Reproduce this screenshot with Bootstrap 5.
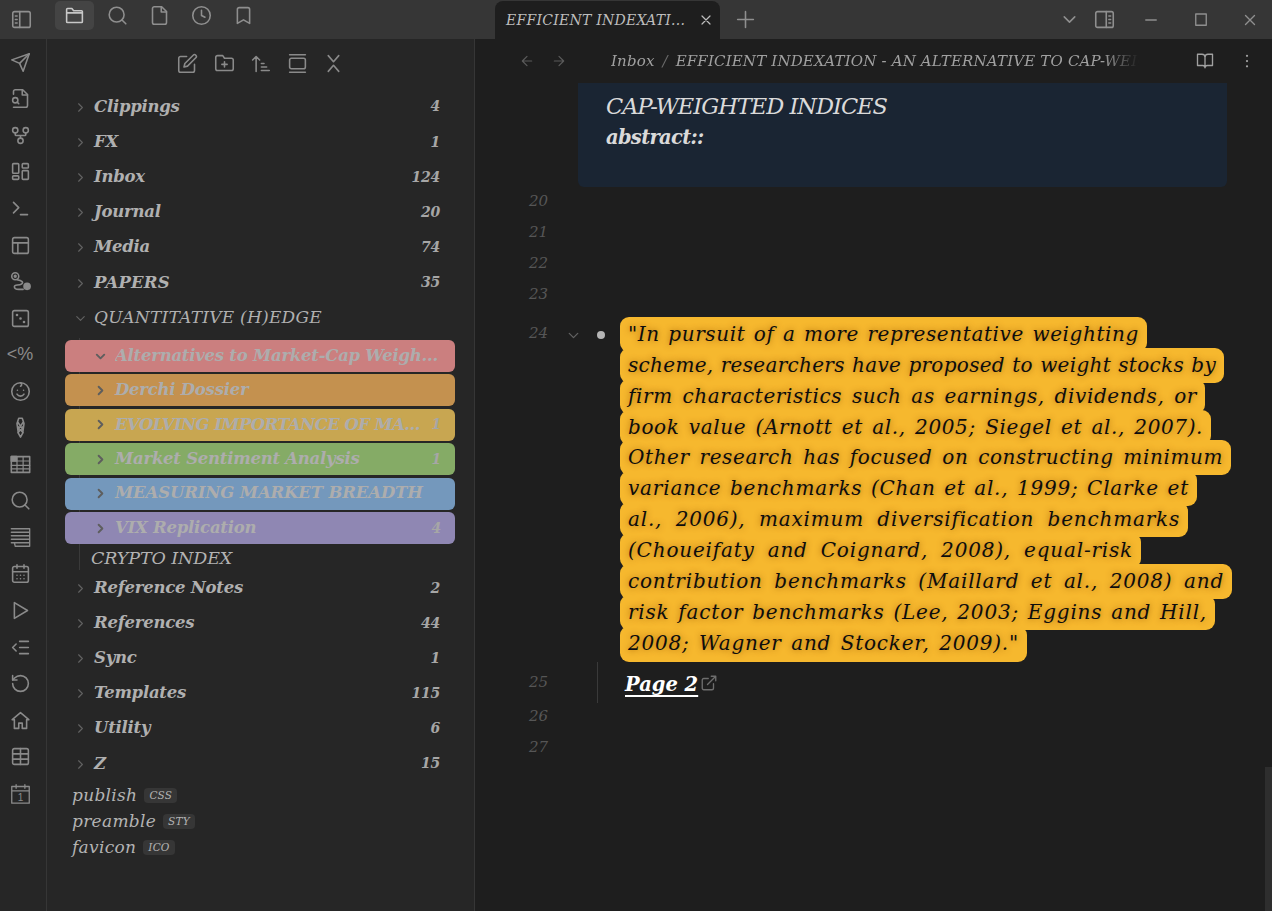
<!DOCTYPE html>
<html lang="en">
<head>
  <meta charset="UTF-8" />
  <meta name="viewport" content="width=device-width, initial-scale=1.0">
  <title>Obsidian</title>
  <link href="https://cdn.jsdelivr.net/npm/bootstrap@5.3.0/dist/css/bootstrap.min.css" rel="stylesheet">
  <style>
    html, body { height: 911px; overflow: hidden; }
    body { background: #1e1e1e; color: #b3b3b3; font-family: "DejaVu Serif", "Liberation Serif", serif; font-style: italic; }
    .ico { width: 21px; height: 21px; fill: none; stroke: currentColor; stroke-width: 1.8; stroke-linecap: round; stroke-linejoin: round; flex: none; }

    .titlebar { height: 39px; background: #363636; color: #8f8f8f; }
    .tb-left { width: 495px; }
    .tb-slot { width: 42px; height: 29px; margin-top: 1px; border-radius: 5px; }
    .tb-slot.on { width: 39px; margin-right: 2px; background: #444; color: #c8c8c8; }
    .tb-toggle { width: 42px; margin-right: 13px; }
    .tab { width: 225px; height: 38px; margin-top: 1px; background: #1e1e1e; border-radius: 8px 8px 0 0; padding: 0 6px 0 11px; color: #bdbdbd; font-size: 14px; letter-spacing: .25px; }
    .tab .ico { width: 16px; height: 16px; }
    .tb-plus { width: 50px; }
    .tb-chev { width: 50px; }
    .tb-panel { margin-right: 11px; }
    .win-btn { width: 50px; }
    .win-btn.close-slot { width: 44px; margin-left: 2px; }
    .win-btn .ico { width: 18px; height: 18px; }

    .workspace { height: 872px; }
    .ribbon { width: 47px; background: #262626; border-right: 1px solid #363636; padding: 5px 6px 0 0; color: #8a8a8a; }
    .rib-item { height: 36.55px; font-size: 18px; font-style: normal; font-family: "Liberation Sans", sans-serif; }

    .filepane { width: 428px; background: #262626; border-right: 1px solid #363636; }
    .nav-head { height: 50.4px; gap: 15.5px; color: #8a8a8a; padding-bottom: 2px; }
    .tree-row { height: 35.2px; padding-right: 34px; font-weight: 700; font-size: 16.5px; letter-spacing: -.25px; color: #b0b0b0; }
    .tree-row .chev { width: 47px; color: #626262; padding-left: 26px; }
    .chev .ico { width: 15px; height: 15px; }
    .cnt { font-size: 14px; letter-spacing: -.2px; color: #a6a6a6; }
    .wide-label { letter-spacing: .2px; }
    .open-label { font-weight: 400; letter-spacing: .25px; font-size: 17px; }

    .kids { position: relative; padding-top: 4.4px; }
    .kids::before { content: ""; position: absolute; left: 32px; top: 2px; bottom: 0; width: 1px; background: #3a3a3a; }
    .hue { position: relative; width: 390px; height: 32px; margin: 0 0 2.4px 18px; border-radius: 6px; padding: 0 14px 0 28px; color: #adadad; font-weight: 700; font-size: 16.5px; letter-spacing: -.25px; white-space: nowrap; }
    .hue .ico { width: 15px; height: 15px; color: #5e5e5e; stroke-width: 3; margin-right: 7px; }
    .hue.tight { letter-spacing: -.15px; }
    .hue.tighter { letter-spacing: -.6px; }
    .hue-red { background: #cb7f7f; }
    .hue-orange { background: #c4914f; }
    .hue-yellow { background: #c8a651; }
    .hue-green { background: #85ab66; }
    .hue-blue { background: #7498bc; }
    .hue-purple { background: #8f87b3; }
    .crypto { position: relative; height: 24px; padding-left: 44px; font-size: 17.5px; letter-spacing: -.1px; color: #b3b3b3; }
    .loose { padding-left: 25px; height: 26px; font-size: 17px; letter-spacing: .3px; color: #b3b3b3; }
    .tree-row + .loose { margin-top: 1px; }
    .ext { margin-left: 7px; background: #363636; border-radius: 4px; padding: 0 5px; font-size: 10.5px; line-height: 15px; letter-spacing: .2px; text-transform: uppercase; }

    .editor { min-width: 0; background: #1e1e1e; }
    .viewbar { height: 44px; padding-left: 44px; color: #5b5b5b; }
    .viewbar .ico { width: 16px; height: 16px; }
    .crumbs { width: 528px; margin-left: 44px; color: #a0a0a0; font-size: 15px; letter-spacing: .17px; white-space: nowrap; overflow: hidden; -webkit-mask-image: linear-gradient(90deg, #000 93%, transparent); mask-image: linear-gradient(90deg, #000 93%, transparent); }
    .crumbs i { color: #6a6a6a; margin: 0 3px; }
    .view-acts { margin-left: 57px; color: #a0a0a0; gap: 24px; }
    .view-acts .ico { width: 18px; height: 18px; }
    .callout { height: 104px; margin: 0 45px 0 103px; padding: 9px 28px; background: #1a2533; border-radius: 0 0 6px 6px; color: #dadada; font-size: 22.5px; line-height: 29px; letter-spacing: -1px; }
    .callout b { display: block; line-height: 34px; font-size: 19.5px; font-weight: 700; letter-spacing: -.7px; }
    .lines { margin-top: -1.5px; }
    .ed-row { height: 31px; }
    .ln { width: 73px; text-align: right; color: #565656; font-size: 15px; line-height: 31px; flex: none; }
    .ed-row.quote { height: auto; padding-top: 11.65px; }
    .quote .ln { line-height: 25px; }
    .gutter-mark { width: 72px; height: 28px; color: #626262; flex: none; padding-left: 17px; gap: 15px; }
    .gutter-mark .ico { width: 17px; height: 17px; }
    .dot { width: 8px; height: 8px; border-radius: 50%; background: #b5b5b5; }
    .hl-line { display: block; margin-top: -4.15px; padding: 0 8px; height: 35px; line-height: 35px; background: #f6b82e; border-radius: 9px; color: #0d0d0d; font-size: 20px; letter-spacing: .3px; white-space: nowrap; text-align: justify; text-align-last: justify; text-shadow: 0 0 6px rgba(160, 90, 0, .9); }
    .hl-line:nth-child(1) { width: 527px; letter-spacing: .6px; }
    .hl-line:nth-child(2) { width: 604px; }
    .hl-line:nth-child(3) { width: 585px; letter-spacing: .6px; }
    .hl-line:nth-child(4) { width: 591px; letter-spacing: .6px; }
    .hl-line:nth-child(5) { width: 611px; letter-spacing: .6px; }
    .hl-line:nth-child(6) { width: 577px; letter-spacing: .8px; }
    .hl-line:nth-child(7) { width: 568px; letter-spacing: .8px; }
    .hl-line:nth-child(8) { width: 521px; letter-spacing: .8px; }
    .hl-line:nth-child(9) { width: 612px; letter-spacing: .8px; }
    .hl-line:nth-child(10) { width: 595px; letter-spacing: .8px; }
    .hl-line:nth-child(11) { width: 407px; height: 36px; letter-spacing: .8px; }
    .ed-row.link { height: 41px; margin-bottom: -1.5px; }
    .link .ln { padding-top: 1px; }
    .indent-line { width: 1px; height: 41px; background: #3a3a3a; margin-left: 49px; }
    .page-link { margin-left: 27px; margin-top: 6px; color: #fff; font-weight: 700; font-size: 19.5px; text-decoration: underline; text-decoration-thickness: 2px; text-underline-offset: 4px; letter-spacing: 0; }
    .page-link + .ico { width: 18px; height: 18px; color: #6e6e6e; margin-left: 2px; margin-top: 2px; }
    .scroll-thumb { position: absolute; right: 0; bottom: 0; width: 7px; height: 144px; background: #2e2e2e; }
  </style>
</head>
<body>
  <svg width="0" height="0" class="position-absolute">
    <defs>
      <symbol id="i-side" viewBox="0 0 24 24"><rect x="2" y="3" width="20" height="18" rx="2"/><path d="M10 3v18M5 8h2M5 12h2M5 16h2"/></symbol>
      <symbol id="i-folder" viewBox="0 0 24 24"><path d="M3 9V5a1 1 0 0 1 1-1h5l2 2.500h9a1 1 0 0 1 1 1V19a1 1 0 0 1-1 1H4a1 1 0 0 1-1-1V9h18"/></symbol>
      <symbol id="i-search" viewBox="0 0 24 24"><circle cx="11" cy="11" r="8.500"/><path d="m21.500 21.500-4.400-4.400"/></symbol>
      <symbol id="i-file" viewBox="0 0 24 24"><path d="M14.500 2H6a2 2 0 0 0-2 2v16a2 2 0 0 0 2 2h12a2 2 0 0 0 2-2V7.500z"/><path d="M14 2v6h6"/></symbol>
      <symbol id="i-clock" viewBox="0 0 24 24"><circle cx="12" cy="12" r="10"/><path d="M12 6v6l4 2"/></symbol>
      <symbol id="i-mark" viewBox="0 0 24 24"><path d="m19 21-7-4-7 4V5a2 2 0 0 1 2-2h10a2 2 0 0 1 2 2z"/></symbol>
      <symbol id="i-x" viewBox="0 0 24 24"><path d="M18 6 6 18M6 6l12 12"/></symbol>
      <symbol id="i-plus" viewBox="0 0 24 24"><path d="M12 3v18M3 12h18"/></symbol>
      <symbol id="i-down" viewBox="0 0 24 24"><path d="m6 9 6 6 6-6"/></symbol>
      <symbol id="i-right" viewBox="0 0 24 24"><path d="m9 18 6-6-6-6"/></symbol>
      <symbol id="i-panel" viewBox="0 0 24 24"><rect x="2" y="3" width="20" height="18" rx="2"/><path d="M14 3v18M17 8h2M17 12h2M17 16h2"/></symbol>
      <symbol id="i-minus" viewBox="0 0 24 24"><path d="M5 12h14"/></symbol>
      <symbol id="i-square" viewBox="0 0 24 24"><rect x="5" y="4" width="14" height="15"/></symbol>
      <symbol id="i-send" viewBox="0 0 24 24"><path d="m22 2-7 20-4-9-9-4z"/><path d="M22 2 11 13"/></symbol>
      <symbol id="i-fsearch" viewBox="0 0 24 24"><path d="M4 22h14a2 2 0 0 0 2-2V7.500L14.500 2H6a2 2 0 0 0-2 2v3"/><path d="M14 2v6h6"/><circle cx="6" cy="14" r="3"/><path d="m10 18-1.800-1.800"/></symbol>
      <symbol id="i-fork" viewBox="0 0 24 24"><circle cx="12" cy="18" r="3"/><circle cx="6" cy="6" r="3"/><circle cx="18" cy="6" r="3"/><path d="M18 9v2c0 .6-.4 1-1 1H7c-.6 0-1-.4-1-1V9M12 12v3"/></symbol>
      <symbol id="i-dash" viewBox="0 0 24 24"><rect x="3" y="3" width="7" height="11" rx="1"/><rect x="14" y="3" width="7" height="5" rx="1"/><rect x="14" y="11" width="7" height="10" rx="1"/><rect x="3" y="17" width="7" height="4" rx="1"/></symbol>
      <symbol id="i-term" viewBox="0 0 24 24"><path d="m4 17 6-6-6-6M12 19h8"/></symbol>
      <symbol id="i-layout" viewBox="0 0 24 24"><rect x="3" y="3" width="18" height="18" rx="2"/><path d="M3 9h18M9 21V9"/></symbol>
      <symbol id="i-route" viewBox="0 0 24 24"><circle cx="6" cy="6" r="4"/><circle cx="6" cy="6" r="1"/><path d="M8 10c6 1 8 3 5 5s-8 0-8 3 3 3 5 3h5"/><circle cx="19.500" cy="17.500" r="3.500" fill="currentColor"/></symbol>
      <symbol id="i-dice" viewBox="0 0 24 24"><rect x="3" y="3" width="18" height="18" rx="2"/><path d="M8 8h.01M12 12h.01M16 16h.01" stroke-width="3"/></symbol>
      <symbol id="i-smile" viewBox="0 0 24 24"><circle cx="12" cy="12" r="10"/><path d="M8 15c2 3 6 3 8 0M8.500 10.500h.01M15.500 10.500h.01M12 2c1.500 1 2 3 0 4"/></symbol>
      <symbol id="i-knot" viewBox="0 0 24 24"><path d="M10 1.500h4l2 6-1.500 11-2.500 4.500-2.500-4.500L8 7.500zM9 6l6 9M15 6l-6 9M9 11l6 7M15 11l-6 7"/></symbol>
      <symbol id="i-grid" viewBox="0 0 24 24"><rect x="1.500" y="3" width="21" height="18"/><rect x="1.500" y="3" width="6" height="5" fill="currentColor"/><path d="M1.500 8h21M1.500 13h21M1.500 17h21M8 3v18M15 3v18" stroke-width="1.400"/></symbol>
      <symbol id="i-doc" viewBox="0 0 24 24"><path d="M1.500 2h21M1.500 6h21M1.500 10h21M1.500 14h21M1.500 18h21M22.500 2v20H6l-1-4" stroke-width="1.500"/></symbol>
      <symbol id="i-cal" viewBox="0 0 24 24"><rect x="3" y="4" width="18" height="18" rx="2"/><path d="M16 2v4M8 2v4M3 10h18M8 14h.01M12 14h.01M16 14h.01M8 18h.01M12 18h.01M16 18h.01"/></symbol>
      <symbol id="i-play" viewBox="0 0 24 24"><path d="M5 3l15 9-15 9z"/></symbol>
      <symbol id="i-indent" viewBox="0 0 24 24"><path d="m7 8-4 4 4 4M11 5h10M11 12h10M11 19h10"/></symbol>
      <symbol id="i-undo" viewBox="0 0 24 24"><path d="M3 12a9 9 0 1 0 9-9 9.750 9.750 0 0 0-6.740 2.740L3 8"/><path d="M3 3v5h5"/></symbol>
      <symbol id="i-home" viewBox="0 0 24 24"><path d="m2.500 11 9.500-8 9.500 8H19v10h-5v-6h-4v6H5V11z"/></symbol>
      <symbol id="i-table" viewBox="0 0 24 24"><rect x="3" y="3" width="18" height="18" rx="2"/><path d="M3 9h18M3 15h18M12 3v18"/></symbol>
      <symbol id="i-day" viewBox="0 0 24 24"><path d="M2 4h20v19H2zM2 9h20M7 2v4M17 2v4" stroke-width="1.500"/><text x="12" y="20.500" text-anchor="middle" font-size="11.500" font-style="normal" font-family="Liberation Sans" fill="currentColor" stroke="none">1</text></symbol>
      <symbol id="i-pen" viewBox="0 0 24 24"><path d="M11 4H4a2 2 0 0 0-2 2v14a2 2 0 0 0 2 2h14a2 2 0 0 0 2-2v-7"/><path d="M18.500 2.500a2.120 2.120 0 0 1 3 3L12 15l-4 1 1-4z"/></symbol>
      <symbol id="i-fplus" viewBox="0 0 24 24"><path d="M4 20h16a2 2 0 0 0 2-2V8a2 2 0 0 0-2-2h-8l-2-3H4a2 2 0 0 0-2 2v13c0 1.100.9 2 2 2zM12 10v6M9 13h6"/></symbol>
      <symbol id="i-sort" viewBox="0 0 24 24"><path d="M7 21V4M3 8l4-4 4 4M13 12h3M13 16h6M13 20h9"/></symbol>
      <symbol id="i-box" viewBox="0 0 24 24"><rect x="3" y="6" width="18" height="12" rx="2"/><path d="M3 2h18M3 22h18"/></symbol>
      <symbol id="i-fold" viewBox="0 0 24 24"><path d="m6 3 6 7 6-7M6 21l6-7 6 7"/></symbol>
      <symbol id="i-back" viewBox="0 0 24 24"><path d="M19 12H5M12 19l-7-7 7-7"/></symbol>
      <symbol id="i-fwd" viewBox="0 0 24 24"><path d="M5 12h14M12 5l7 7-7 7"/></symbol>
      <symbol id="i-book" viewBox="0 0 24 24"><path d="M2 3h6a4 4 0 0 1 4 4v14a3 3 0 0 0-3-3H2zM22 3h-6a4 4 0 0 0-4 4v14a3 3 0 0 1 3-3h7z"/></symbol>
      <symbol id="i-more" viewBox="0 0 24 24"><path d="M12 5h.01M12 12h.01M12 19h.01" stroke-width="3"/></symbol>
      <symbol id="i-out" viewBox="0 0 24 24"><path d="M18 13v6a2 2 0 0 1-2 2H5a2 2 0 0 1-2-2V8a2 2 0 0 1 2-2h6M15 3h6v6M10 14 21 3"/></symbol>
    </defs>
  </svg>

  <!-- Title bar -->
  <div class="titlebar d-flex">
    <div class="tb-left d-flex">
      <span class="tb-toggle d-flex align-items-center justify-content-center"><svg class="ico"><use href="#i-side"/></svg></span>
      <span class="tb-slot on d-flex align-items-center justify-content-center"><svg class="ico"><use href="#i-folder"/></svg></span>
      <span class="tb-slot d-flex align-items-center justify-content-center"><svg class="ico"><use href="#i-search"/></svg></span>
      <span class="tb-slot d-flex align-items-center justify-content-center"><svg class="ico"><use href="#i-file"/></svg></span>
      <span class="tb-slot d-flex align-items-center justify-content-center"><svg class="ico"><use href="#i-clock"/></svg></span>
      <span class="tb-slot d-flex align-items-center justify-content-center"><svg class="ico"><use href="#i-mark"/></svg></span>
    </div>
    <div class="tab d-flex align-items-center justify-content-between">
      <span>EFFICIENT INDEXATI...</span><svg class="ico"><use href="#i-x"/></svg>
    </div>
    <span class="tb-plus d-flex align-items-center justify-content-center"><svg class="ico"><use href="#i-plus"/></svg></span>
    <div class="ms-auto d-flex align-items-center">
      <span class="tb-chev d-flex justify-content-center"><svg class="ico"><use href="#i-down"/></svg></span>
      <span class="tb-panel d-flex justify-content-center"><svg class="ico"><use href="#i-panel"/></svg></span>
      <span class="win-btn d-flex justify-content-center"><svg class="ico"><use href="#i-minus"/></svg></span>
      <span class="win-btn d-flex justify-content-center"><svg class="ico"><use href="#i-square"/></svg></span>
      <span class="win-btn close-slot d-flex justify-content-center"><svg class="ico"><use href="#i-x"/></svg></span>
    </div>
  </div>

  <div class="workspace d-flex position-relative">
    <!-- Ribbon -->
    <div class="ribbon d-flex flex-column">
      <span class="rib-item d-flex align-items-center justify-content-center"><svg class="ico"><use href="#i-send"/></svg></span>
      <span class="rib-item d-flex align-items-center justify-content-center"><svg class="ico"><use href="#i-fsearch"/></svg></span>
      <span class="rib-item d-flex align-items-center justify-content-center"><svg class="ico"><use href="#i-fork"/></svg></span>
      <span class="rib-item d-flex align-items-center justify-content-center"><svg class="ico"><use href="#i-dash"/></svg></span>
      <span class="rib-item d-flex align-items-center justify-content-center"><svg class="ico"><use href="#i-term"/></svg></span>
      <span class="rib-item d-flex align-items-center justify-content-center"><svg class="ico"><use href="#i-layout"/></svg></span>
      <span class="rib-item d-flex align-items-center justify-content-center"><svg class="ico"><use href="#i-route"/></svg></span>
      <span class="rib-item d-flex align-items-center justify-content-center"><svg class="ico"><use href="#i-dice"/></svg></span>
      <span class="rib-item d-flex align-items-center justify-content-center">&lt;%</span>
      <span class="rib-item d-flex align-items-center justify-content-center"><svg class="ico"><use href="#i-smile"/></svg></span>
      <span class="rib-item d-flex align-items-center justify-content-center"><svg class="ico"><use href="#i-knot"/></svg></span>
      <span class="rib-item d-flex align-items-center justify-content-center"><svg class="ico"><use href="#i-grid"/></svg></span>
      <span class="rib-item d-flex align-items-center justify-content-center"><svg class="ico"><use href="#i-search"/></svg></span>
      <span class="rib-item d-flex align-items-center justify-content-center"><svg class="ico"><use href="#i-doc"/></svg></span>
      <span class="rib-item d-flex align-items-center justify-content-center"><svg class="ico"><use href="#i-cal"/></svg></span>
      <span class="rib-item d-flex align-items-center justify-content-center"><svg class="ico"><use href="#i-play"/></svg></span>
      <span class="rib-item d-flex align-items-center justify-content-center"><svg class="ico"><use href="#i-indent"/></svg></span>
      <span class="rib-item d-flex align-items-center justify-content-center"><svg class="ico"><use href="#i-undo"/></svg></span>
      <span class="rib-item d-flex align-items-center justify-content-center"><svg class="ico"><use href="#i-home"/></svg></span>
      <span class="rib-item d-flex align-items-center justify-content-center"><svg class="ico"><use href="#i-table"/></svg></span>
      <span class="rib-item d-flex align-items-center justify-content-center"><svg class="ico"><use href="#i-day"/></svg></span>
    </div>

    <!-- File explorer -->
    <div class="filepane flex-shrink-0">
      <div class="nav-head d-flex align-items-center justify-content-center">
        <svg class="ico"><use href="#i-pen"/></svg>
        <svg class="ico"><use href="#i-fplus"/></svg>
        <svg class="ico"><use href="#i-sort"/></svg>
        <svg class="ico"><use href="#i-box"/></svg>
        <svg class="ico"><use href="#i-fold"/></svg>
      </div>
      <div class="tree-row d-flex align-items-center"><span class="chev"><svg class="ico"><use href="#i-right"/></svg></span><span>Clippings</span><span class="cnt ms-auto">4</span></div>
      <div class="tree-row d-flex align-items-center"><span class="chev"><svg class="ico"><use href="#i-right"/></svg></span><span>FX</span><span class="cnt ms-auto">1</span></div>
      <div class="tree-row d-flex align-items-center"><span class="chev"><svg class="ico"><use href="#i-right"/></svg></span><span>Inbox</span><span class="cnt ms-auto">124</span></div>
      <div class="tree-row d-flex align-items-center"><span class="chev"><svg class="ico"><use href="#i-right"/></svg></span><span>Journal</span><span class="cnt ms-auto">20</span></div>
      <div class="tree-row d-flex align-items-center"><span class="chev"><svg class="ico"><use href="#i-right"/></svg></span><span>Media</span><span class="cnt ms-auto">74</span></div>
      <div class="tree-row d-flex align-items-center"><span class="chev"><svg class="ico"><use href="#i-right"/></svg></span><span class="wide-label">PAPERS</span><span class="cnt ms-auto">35</span></div>
      <div class="tree-row d-flex align-items-center"><span class="chev"><svg class="ico"><use href="#i-down"/></svg></span><span class="open-label">QUANTITATIVE (H)EDGE</span></div>
      <div class="kids">
        <div class="hue hue-red d-flex align-items-center"><svg class="ico"><use href="#i-down"/></svg><span class="text-truncate">Alternatives to Market-Cap Weigh...</span></div>
        <div class="hue hue-orange d-flex align-items-center"><svg class="ico"><use href="#i-right"/></svg><span>Derchi Dossier</span></div>
        <div class="hue hue-yellow tighter d-flex align-items-center"><svg class="ico"><use href="#i-right"/></svg><span>EVOLVING IMPORTANCE OF MA...</span><span class="cnt ms-auto">1</span></div>
        <div class="hue hue-green d-flex align-items-center"><svg class="ico"><use href="#i-right"/></svg><span>Market Sentiment Analysis</span><span class="cnt ms-auto">1</span></div>
        <div class="hue hue-blue tight d-flex align-items-center"><svg class="ico"><use href="#i-right"/></svg><span>MEASURING MARKET BREADTH</span></div>
        <div class="hue hue-purple d-flex align-items-center"><svg class="ico"><use href="#i-right"/></svg><span>VIX Replication</span><span class="cnt ms-auto">4</span></div>
        <div class="crypto d-flex align-items-center">CRYPTO INDEX</div>
      </div>
      <div class="tree-row d-flex align-items-center"><span class="chev"><svg class="ico"><use href="#i-right"/></svg></span><span>Reference Notes</span><span class="cnt ms-auto">2</span></div>
      <div class="tree-row d-flex align-items-center"><span class="chev"><svg class="ico"><use href="#i-right"/></svg></span><span>References</span><span class="cnt ms-auto">44</span></div>
      <div class="tree-row d-flex align-items-center"><span class="chev"><svg class="ico"><use href="#i-right"/></svg></span><span>Sync</span><span class="cnt ms-auto">1</span></div>
      <div class="tree-row d-flex align-items-center"><span class="chev"><svg class="ico"><use href="#i-right"/></svg></span><span>Templates</span><span class="cnt ms-auto">115</span></div>
      <div class="tree-row d-flex align-items-center"><span class="chev"><svg class="ico"><use href="#i-right"/></svg></span><span>Utility</span><span class="cnt ms-auto">6</span></div>
      <div class="tree-row d-flex align-items-center"><span class="chev"><svg class="ico"><use href="#i-right"/></svg></span><span>Z</span><span class="cnt ms-auto">15</span></div>
      <div class="loose d-flex align-items-center">publish<span class="ext">css</span></div>
      <div class="loose d-flex align-items-center">preamble<span class="ext">sty</span></div>
      <div class="loose d-flex align-items-center">favicon<span class="ext">ico</span></div>
    </div>

    <!-- Editor -->
    <div class="editor flex-grow-1">
      <div class="viewbar d-flex align-items-center">
        <svg class="ico"><use href="#i-back"/></svg>
        <svg class="ico ms-3"><use href="#i-fwd"/></svg>
        <div class="crumbs">Inbox <i>/</i> EFFICIENT INDEXATION - AN ALTERNATIVE TO CAP-WEIGHTED INDICES</div>
        <div class="view-acts d-flex align-items-center"><svg class="ico"><use href="#i-book"/></svg><svg class="ico"><use href="#i-more"/></svg></div>
      </div>
      <div class="callout">CAP-WEIGHTED INDICES<b>abstract::</b></div>
      <div class="lines">
        <div class="ed-row d-flex"><span class="ln">20</span></div>
        <div class="ed-row d-flex"><span class="ln">21</span></div>
        <div class="ed-row d-flex"><span class="ln">22</span></div>
        <div class="ed-row d-flex"><span class="ln">23</span></div>
        <div class="ed-row quote d-flex">
          <span class="ln">24</span>
          <span class="gutter-mark d-flex align-items-center"><svg class="ico"><use href="#i-down"/></svg><span class="dot"></span></span>
          <div>
            <span class="hl-line">"In pursuit of a more representative weighting</span>
            <span class="hl-line">scheme, researchers have proposed to weight stocks by</span>
            <span class="hl-line">firm characteristics such as earnings, dividends, or</span>
            <span class="hl-line">book value (Arnott et al., 2005; Siegel et al., 2007).</span>
            <span class="hl-line">Other research has focused on constructing minimum</span>
            <span class="hl-line">variance benchmarks (Chan et al., 1999; Clarke et</span>
            <span class="hl-line">al., 2006), maximum diversification benchmarks</span>
            <span class="hl-line">(Choueifaty and Coignard, 2008), equal-risk</span>
            <span class="hl-line">contribution benchmarks (Maillard et al., 2008) and</span>
            <span class="hl-line">risk factor benchmarks (Lee, 2003; Eggins and Hill,</span>
            <span class="hl-line">2008; Wagner and Stocker, 2009)."</span>
          </div>
        </div>
        <div class="ed-row link d-flex align-items-center">
          <span class="ln">25</span><span class="indent-line"></span>
          <a class="page-link" href="#">Page 2</a><svg class="ico"><use href="#i-out"/></svg>
        </div>
        <div class="ed-row d-flex"><span class="ln">26</span></div>
        <div class="ed-row d-flex"><span class="ln">27</span></div>
      </div>
    </div>
    <div class="scroll-thumb"></div>
  </div>

  <script src="https://cdn.jsdelivr.net/npm/bootstrap@5.3.0/dist/js/bootstrap.bundle.min.js"></script>
</body>
</html>
